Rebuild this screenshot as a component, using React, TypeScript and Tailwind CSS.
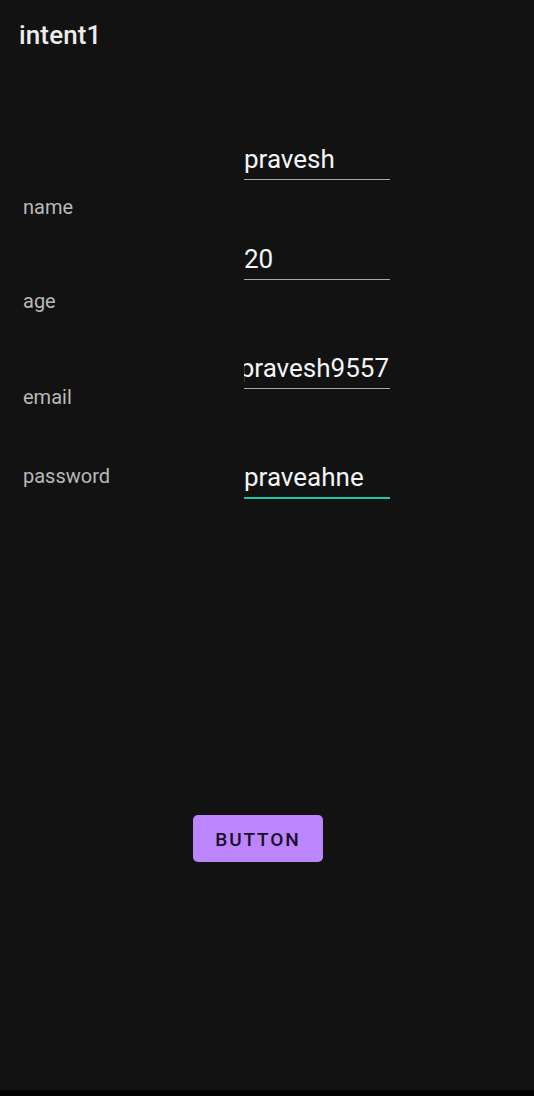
import React from "react";

function Field({ value, mt, focused = false, clip = false }: { value: string; mt: string; focused?: boolean; clip?: boolean }) {
  return (
    <div
      className={`${mt} w-[146px] ${focused ? "border-b-2 border-[#22c3ad]" : "border-b border-[#a9a9a9]"} pb-[5px] overflow-hidden`}
    >
      <div className={`flex ${clip ? "justify-end pr-[1px]" : "justify-start"} whitespace-nowrap text-[26px] leading-[30px] text-[#f4f4f4]`}>
        {value}
      </div>
    </div>
  );
}

export default function App() {
  return (
    <div className="w-[534px] h-[1096px] bg-[#121212] flex flex-col" style={{ fontFamily: "Roboto, 'Noto Sans', sans-serif" }}>
      <div className="h-[76px] pt-[19px] pl-[19px]">
        <div className="text-[26px] leading-[32px] font-medium tracking-[0.005em] text-[#ececec]">intent1</div>
      </div>

      {/* name */}
      <div className="flex items-start">
        <div className="mt-[119px] w-[244px] pl-[23px] text-[20px] leading-[24px] text-[#b9b9b9]">name</div>
        <Field value="pravesh" mt="mt-[68px]" />
      </div>

      {/* age */}
      <div className="flex items-start">
        <div className="mt-[70px] w-[244px] pl-[23px] text-[20px] leading-[24px] text-[#b9b9b9]">age</div>
        <Field value="20" mt="mt-[25px]" />
      </div>

      {/* email */}
      <div className="flex items-start">
        <div className="mt-[72px] w-[244px] pl-[23px] text-[20px] leading-[24px] text-[#b9b9b9]">email</div>
        <Field value="pravesh9557" mt="mt-[40px]" clip />
      </div>

      {/* password */}
      <div className="flex items-start">
        <div className="mt-[55px] w-[244px] pl-[23px] text-[20px] leading-[24px] text-[#b9b9b9]">password</div>
        <Field value="praveahne" mt="mt-[53px]" focused />
      </div>

      <div className="flex-1 flex flex-col">
        <div className="mt-[316px] ml-[193px] w-[130px] h-[47px] rounded-[5px] bg-[#bb86fc] flex items-center justify-center">
          <span className="text-[19px] leading-[24px] pt-[2px] font-medium tracking-[0.1em] text-[#1a0b2b]">BUTTON</span>
        </div>
      </div>

      <div className="h-[6px] bg-black" />
    </div>
  );
}
